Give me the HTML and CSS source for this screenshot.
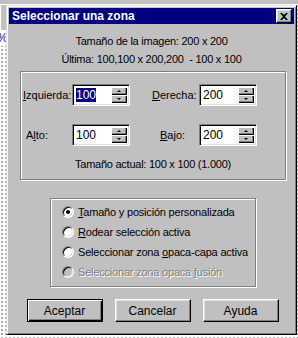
FILE: index.html
```html
<!DOCTYPE html>
<html lang="es">
<head>
    <meta charset="UTF-8">
    <meta name="viewport" content="width=device-width, initial-scale=1.0">
    <title>Seleccionar una zona</title>
    <link rel="stylesheet" href="styles.css">
</head>
<body>

    <!-- Strip of the app window behind the dialog -->
    <div class="top-strip"></div>

    <div class="desk">
        <div class="side">
            <div class="side-gray"></div>
            <div class="side-white"><span>%</span></div>
        </div>

        <!-- Dialog -->
        <div class="dialog">
            <div class="titlebar">
                <span class="title">Seleccionar una zona</span>
                <span class="close">
                    <svg width="8" height="7" viewBox="0 0 8 7">
                        <path d="M0 0h2l2 2 2-2h2L5 3.5 8 7H6L4 5 2 7H0l3-3.5z" fill="#000"/>
                    </svg>
                </span>
            </div>

            <div class="info">
                <p>Tamaño de la imagen: 200 x 200</p>
                <p>Última: 100,100 x 200,200 &nbsp;- 100 x 100</p>
            </div>

            <div class="group group-size">
                <div class="fields">
                    <label class="lbl lbl-izq"><u>I</u>zquierda:</label>
                    <div class="spin">
                        <span class="val"><span class="sel">100</span></span>
                        <span class="spin-btns"><span class="sb up"></span><span class="sb down"></span></span>
                    </div>
                    <label class="lbl lbl-der"><u>D</u>erecha:</label>
                    <div class="spin">
                        <span class="val">200</span>
                        <span class="spin-btns"><span class="sb up"></span><span class="sb down"></span></span>
                    </div>

                    <label class="lbl lbl-alto">A<u>l</u>to:</label>
                    <div class="spin">
                        <span class="val">100</span>
                        <span class="spin-btns"><span class="sb up"></span><span class="sb down"></span></span>
                    </div>
                    <label class="lbl lbl-bajo"><u>B</u>ajo:</label>
                    <div class="spin">
                        <span class="val">200</span>
                        <span class="spin-btns"><span class="sb up"></span><span class="sb down"></span></span>
                    </div>
                </div>
                <p class="actual">Tamaño actual: 100 x 100 (1.000)</p>
            </div>

            <div class="group group-mode">
                <div class="radio checked"><span class="dot"></span><span><u>T</u>amaño y posición personalizada</span></div>
                <div class="radio"><span class="dot"></span><span><u>R</u>odear selección activa</span></div>
                <div class="radio"><span class="dot"></span><span>Seleccionar zona <u>o</u>paca-capa activa</span></div>
                <div class="radio disabled"><span class="dot"></span><span>Seleccionar zona opaca <u>f</u>usión</span></div>
            </div>

            <div class="buttons">
                <button class="btn default">Aceptar</button>
                <button class="btn">Cancelar</button>
                <button class="btn">Ayuda</button>
            </div>
        </div>
    </div>

</body>
</html>
```

FILE: styles.css
```css
body {
    margin: 0;
    width: 298px;
    height: 338px;
    overflow: hidden;
    font-family: "Liberation Sans", Arial, sans-serif;
    font-size: 11px;
    color: #000;
    background-color: #fff;
    background-image: radial-gradient(#a8a8a8 0.8px, transparent 1px);
    background-size: 4px 4px;
}
p { margin: 0; }

.top-strip {
    height: 4px;
    background: #c0c0c0;
    border-bottom: 1px solid #fff;
}
.desk { display: flex; }
.side { width: 6px; overflow: hidden; }
.side-gray { height: 25px; background: #c0c0c0; border-left: 1px solid #fff; }
.side-white { height: 16px; background: #fff; color: #1a1aa0; font-size: 12px; line-height: 16px; }
.side-white span { margin-left: -3px; }

/* window frame */
.dialog {
    width: 291px;
    height: 330px;
    box-sizing: border-box;
    background: #c0c0c0;
    border: 1px solid;
    border-color: #dfdfdf #000 #000 #dfdfdf;
    box-shadow: inset 1px 1px #fff, inset -1px -1px #808080;
    padding: 2px;
}
.titlebar {
    height: 16px;
    background: #000080;
    display: flex;
    align-items: center;
    justify-content: space-between;
    padding: 0 2px 0 3px;
}
.title { color: #fff; font-weight: bold; font-size: 12px; }
.close {
    width: 16px;
    height: 14px;
    box-sizing: border-box;
    background: #c0c0c0;
    border: 1px solid;
    border-color: #fff #000 #000 #fff;
    box-shadow: inset -1px -1px #808080, inset 1px 1px #dfdfdf;
    display: flex;
    align-items: center;
    justify-content: center;
}

.info {
    margin-top: 8px;
    text-align: center;
    line-height: 18px;
    letter-spacing: -0.25px;
}

/* etched group boxes */
.group {
    border: 1px solid #808080;
    box-shadow: inset 1px 1px #fff, 1px 1px #fff;
    box-sizing: border-box;
}
.group-size {
    margin: 3px 0 0 11px;
    width: 266px;
    height: 109px;
    padding-top: 12px;
}
.fields {
    display: grid;
    grid-template-columns: 51px 58px 69px 58px;
    grid-auto-rows: 22px;
    row-gap: 18px;
    align-items: center;
}
.lbl-izq { padding-left: 2px; }
.lbl-alto { padding-left: 5px; }
.lbl-der { padding-left: 22px; }
.lbl-bajo { padding-left: 30px; }

.spin {
    height: 22px;
    box-sizing: border-box;
    background: #fff;
    border: 1px solid;
    border-color: #808080 #fff #fff #808080;
    box-shadow: inset 1px 1px #000, inset -1px -1px #dfdfdf;
    padding: 2px 2px 2px 2px;
    display: flex;
}
.val { flex: 1; font-size: 12px; line-height: 17px; padding-left: 1px; }
.sel { background: #000080; color: #fff; }
.spin-btns { width: 16px; display: flex; flex-direction: column; }
.sb {
    flex: 1;
    background: #c0c0c0;
    box-shadow: inset 1px 1px #fff, inset -1px -1px #000, inset -2px -2px #808080;
    display: flex;
    align-items: center;
    justify-content: center;
}
.sb::after {
    content: "";
    border-left: 2px solid transparent;
    border-right: 2px solid transparent;
}
.up::after { border-bottom: 2px solid #000; }
.down::after { border-top: 2px solid #000; }

.actual {
    margin-top: 9px;
    text-align: center;
    line-height: 18px;
    letter-spacing: -0.25px;
}

.group-mode {
    margin: 18px 0 0 41px;
    width: 206px;
    height: 89px;
    padding: 3px 0 0 11px;
}
.radio {
    height: 20px;
    display: flex;
    align-items: center;
    gap: 4px;
    letter-spacing: -0.2px;
}
.dot {
    width: 12px;
    height: 12px;
    box-sizing: border-box;
    border-radius: 50%;
    background: #fff;
    border: 1px solid;
    border-color: #808080 #fff #fff #808080;
    box-shadow: inset 1px 1px #000, inset -1px -1px #dfdfdf;
    display: flex;
    align-items: center;
    justify-content: center;
}
.checked .dot::after {
    content: "";
    width: 4px;
    height: 4px;
    border-radius: 50%;
    background: #000;
}
.disabled { color: #808080; text-shadow: 1px 1px #fff; }
.disabled .dot { background: #c0c0c0; }

.buttons {
    margin-top: 12px;
    display: flex;
    justify-content: center;
    gap: 12px;
    padding-left: 2px;
}
.btn {
    width: 76px;
    height: 23px;
    font-family: "Liberation Sans", Arial, sans-serif;
    font-size: 12px;
    color: #000;
    background: #c0c0c0;
    border: 1px solid;
    border-color: #fff #000 #000 #fff;
    box-shadow: inset -1px -1px #808080, inset 1px 1px #dfdfdf;
    padding: 0;
}
.btn.default {
    border-color: #000;
    box-shadow: inset 1px 1px #fff, inset -1px -1px #000, inset -2px -2px #808080;
}
```
